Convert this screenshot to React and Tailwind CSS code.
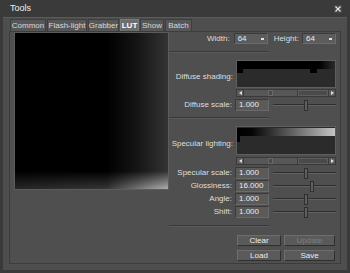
import React from "react";

function Sep() {
  return <div className="self-end w-[100px] h-[2px] border-t border-[#393939] border-b border-b-[#5a5a5a] mr-[4px]" />;
}

function Input({ value }) {
  return (
    <div className="w-[34px] h-[12px] bg-[#5a5a5a] border border-[#3a3a3a] border-b-[#6a6a6a] border-r-[#6a6a6a] flex items-center pl-[3px] text-[#ececec] leading-none">
      {value}
    </div>
  );
}

function Select({ value }) {
  return (
    <div className="w-[34px] h-[11px] bg-[#5c5c5c] border border-[#3a3a3a] border-b-[#6c6c6c] border-r-[#6c6c6c] flex items-center justify-between pl-[3px] pr-[3px] text-[#ececec] leading-none">
      <span>{value}</span>
      <span className="w-[3px] h-[2px] bg-[#e0e0e0]" />
    </div>
  );
}

function Slider({ pos }) {
  return (
    <div className="relative w-[63px] h-[11px] flex items-center">
      <div className="w-full h-[2px] bg-[#2e2e2e] border-b border-[#626262]" />
      <div
        className="absolute top-0 w-[4px] h-[11px] bg-[#5e5e5e] border border-[#2f2f2f]"
        style={{ left: pos }}
      />
    </div>
  );
}

function Row({ label, value, pos }) {
  return (
    <div className="flex items-center justify-end h-[12px] pr-[4px]">
      <span className="mr-[3px] whitespace-nowrap">{label}</span>
      <Input value={value} />
      <div className="ml-[4px]">
        <Slider pos={pos} />
      </div>
    </div>
  );
}

function Scrollbar() {
  return (
    <div className="self-end mr-[4px] w-[100px] h-[8px] flex bg-[#474747] border border-[#3a3a3a]">
      <div className="w-[7px] h-full bg-[#5a5a5a] border-r border-[#3a3a3a] flex items-center justify-center">
        <svg width="3" height="4" viewBox="0 0 3 4"><path d="M3 0 L0 2 L3 4 Z" fill="#e0e0e0" /></svg>
      </div>
      <div className="w-[54px] h-full bg-[#575757] border-r border-[#3c3c3c] flex items-center justify-center">
        <div className="w-[5px] h-[6px] bg-[#4a4a4a] border border-[#6a6a6a]" />
      </div>
      <div className="flex-1 h-full bg-[#4a4a4a] border border-[#5e5e5e]" />
      <div className="w-[7px] h-full bg-[#5a5a5a] border-l border-[#3a3a3a] flex items-center justify-center">
        <svg width="3" height="4" viewBox="0 0 3 4"><path d="M0 0 L3 2 L0 4 Z" fill="#e0e0e0" /></svg>
      </div>
    </div>
  );
}

function Btn({ children, w, disabled }) {
  return (
    <div
      className={`${w} h-[11px] bg-[#5a5a5a] border border-[#6e6e6e] border-b-[#2f2f2f] border-r-[#2f2f2f] flex items-center justify-center leading-none ${disabled ? "text-[#7c7c7c]" : "text-[#ececec]"}`}
    >
      {children}
    </div>
  );
}

function Tab({ children, w, active }) {
  return (
    <div
      className={`${w} h-[12px] flex items-center justify-center border border-b-0 leading-none ${
        active
          ? "bg-[#6d6d6d] border-[#7a7a7a] text-white font-bold"
          : "bg-[#575757] border-[#3e3e3e] text-[#d8d8d8]"
      }`}
    >
      {children}
    </div>
  );
}

export default function App() {
  return (
    <div className="w-[350px] h-[273px] bg-[#3a3a3a] flex flex-col overflow-hidden text-[8px] text-[#dedede] font-['Liberation_Sans',Arial,sans-serif]">
      {/* title bar */}
      <div className="h-[17px] flex items-center justify-between pl-[10px] pr-[8px]">
        <span className="text-[9px] text-[#f0f0f0]">Tools</span>
        <div className="w-[8px] h-[8px] bg-[#474747] flex items-center justify-center">
          <svg width="6" height="6" viewBox="0 0 6 6">
            <path d="M0.5 0.5 L5.5 5.5 M5.5 0.5 L0.5 5.5" stroke="#e8e8e8" strokeWidth="1.2" />
          </svg>
        </div>
      </div>
      {/* body */}
      <div className="flex-1 mx-[3px] mb-[3px] bg-[#4e4e4e] border-t border-[#5a5a5a] px-[6px] pt-[1px] pb-[6px] flex flex-col">
        <div className="flex gap-[1px] pl-[1px] h-[12px]">
          <Tab w="w-[36px]">Common</Tab>
          <Tab w="w-[40px]">Flash-light</Tab>
          <Tab w="w-[31px]">Grabber</Tab>
          <Tab w="w-[19px]" active>LUT</Tab>
          <Tab w="w-[24px]">Show</Tab>
          <Tab w="w-[27px]">Batch</Tab>
        </div>
        <div className="flex-1 flex border border-[#3c3c3c] bg-[#4f4f4f]">
          {/* preview */}
          <div className="ml-[4px] w-[155px] h-[158px] border border-[#5c5c5c] bg-black">
            <svg width="153" height="156" viewBox="0 0 153 156" className="block">
              <defs>
                <linearGradient id="h" x1="0" y1="0" x2="1" y2="0">
                  <stop offset="0" stopColor="#000" />
                  <stop offset="0.6" stopColor="#000" />
                  <stop offset="0.8" stopColor="#151515" />
                  <stop offset="1" stopColor="#343434" />
                </linearGradient>
                <linearGradient id="v" x1="0" y1="0" x2="0" y2="1">
                  <stop offset="0" stopColor="#fff" stopOpacity="0" />
                  <stop offset="1" stopColor="#fff" stopOpacity="0.6" />
                </linearGradient>
                <linearGradient id="hm" x1="0" y1="0" x2="1" y2="0">
                  <stop offset="0" stopColor="#fff" stopOpacity="0.25" />
                  <stop offset="0.6" stopColor="#fff" stopOpacity="0.35" />
                  <stop offset="1" stopColor="#fff" stopOpacity="1" />
                </linearGradient>
                <mask id="m">
                  <rect width="153" height="156" fill="url(#hm)" />
                </mask>
              </defs>
              <rect width="153" height="156" fill="url(#h)" />
              <rect y="138" width="153" height="18" fill="url(#v)" mask="url(#m)" />
            </svg>
          </div>
          {/* right column */}
          <div className="flex-1 flex flex-col pt-[1px]">
            <div className="flex items-center justify-end h-[11px] pr-[4px]">
              <span className="mr-[4px]">Width:</span>
              <Select value="64" />
              <span className="ml-[6px] mr-[3px]">Height:</span>
              <Select value="64" />
            </div>
            <div className="mt-[7px]"><Sep /></div>
            <div className="mt-[7px] flex items-center justify-end pr-[4px]">
              <span className="mr-[3px] pt-[6px]">Diffuse shading:</span>
              <div className="w-[100px] h-[28px] border border-[#5e5e5e] bg-[#2b2b2b]">
                <svg width="98" height="26" viewBox="0 0 98 26" className="block">
                  <defs>
                    <linearGradient id="d" x1="0" y1="0" x2="1" y2="0">
                      <stop offset="0" stopColor="#000" />
                      <stop offset="0.84" stopColor="#000" />
                      <stop offset="1" stopColor="#2b2b2b" />
                    </linearGradient>
                  </defs>
                  <path d="M0 0 H98 V8 H80 V12 H73 V8 H6 V12 H0 Z" fill="url(#d)" />
                </svg>
              </div>
            </div>
            <div className="mt-[1px] flex"><div className="flex-1" /><Scrollbar /></div>
            <div className="mt-[2px]"><Row label="Diffuse scale:" value="1.000" pos={31} /></div>
            <div className="mt-[6px]"><Sep /></div>
            <div className="mt-[7px] flex items-center justify-end pr-[4px]">
              <span className="mr-[3px] pt-[7px]">Specular lighting:</span>
              <div className="w-[100px] h-[29px] border border-[#5e5e5e] bg-[#2b2b2b]">
                <svg width="98" height="27" viewBox="0 0 98 27" className="block">
                  <defs>
                    <linearGradient id="s" x1="0" y1="0" x2="1" y2="0">
                      <stop offset="0" stopColor="#000" />
                      <stop offset="0.15" stopColor="#050505" />
                      <stop offset="1" stopColor="#c4c4c4" />
                    </linearGradient>
                  </defs>
                  <path d="M0 1 H98 V9 H3 V15 H0 Z" fill="url(#s)" />
                </svg>
              </div>
            </div>
            <div className="mt-[2px] flex"><div className="flex-1" /><Scrollbar /></div>
            <div className="mt-[2px] flex flex-col gap-[1px]">
              <Row label="Specular scale:" value="1.000" pos={31} />
              <Row label="Glossiness:" value="16.000" pos={37} />
              <Row label="Angle:" value="1.000" pos={31} />
              <Row label="Shift:" value="1.000" pos={31} />
            </div>
            <div className="mt-[7px]"><Sep /></div>
            <div className="mt-[8px] self-end mr-[4px] w-[100px] flex flex-col gap-[4px]">
              <div className="flex justify-between pl-[1px] pr-[1px]">
                <Btn w="w-[44px]">Clear</Btn>
                <Btn w="w-[51px]" disabled>Update</Btn>
              </div>
              <div className="flex justify-between pl-[1px] pr-[1px]">
                <Btn w="w-[44px]">Load</Btn>
                <Btn w="w-[51px]">Save</Btn>
              </div>
            </div>
          </div>
        </div>
      </div>
    </div>
  );
}
